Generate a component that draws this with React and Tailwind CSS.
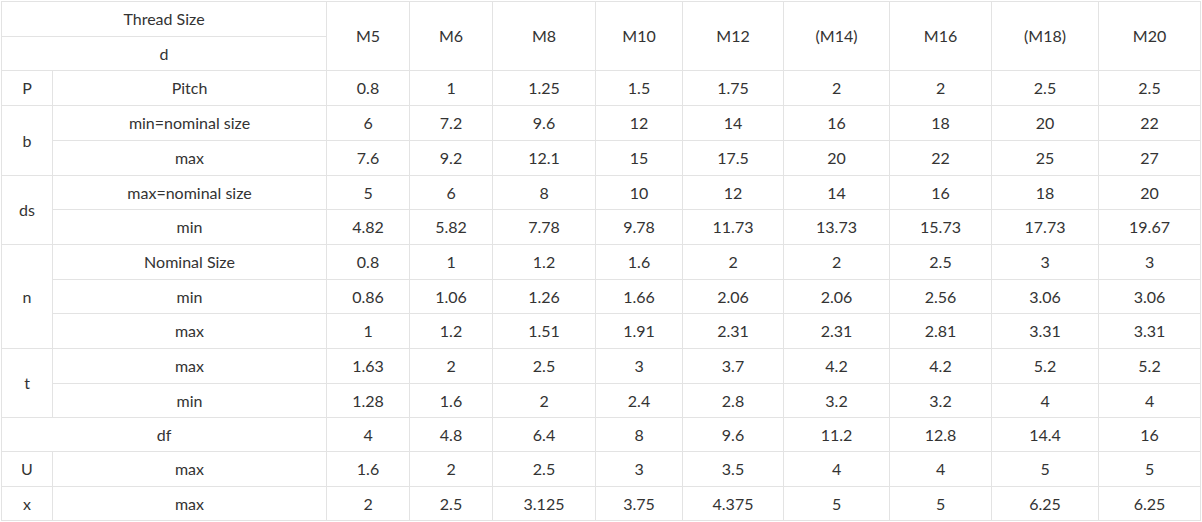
const SIZES = ['M5', 'M6', 'M8', 'M10', 'M12', '(M14)', 'M16', '(M18)', 'M20'];
const COLS = [51, 274, 83, 83, 103, 87, 101, 106, 102, 107, 102];

// [symbol, rowSpan, label, values, height]
const ROWS = [
  ['P', 1, 'Pitch', ['0.8', '1', '1.25', '1.5', '1.75', '2', '2', '2.5', '2.5'], 'h-[35px]'],
  ['b', 2, 'min=nominal size', ['6', '7.2', '9.6', '12', '14', '16', '18', '20', '22'], 'h-[35px]'],
  [null, 0, 'max', ['7.6', '9.2', '12.1', '15', '17.5', '20', '22', '25', '27'], 'h-[35px]'],
  ['ds', 2, 'max=nominal size', ['5', '6', '8', '10', '12', '14', '16', '18', '20'], 'h-[34px]'],
  [null, 0, 'min', ['4.82', '5.82', '7.78', '9.78', '11.73', '13.73', '15.73', '17.73', '19.67'], 'h-[35px]'],
  ['n', 3, 'Nominal Size', ['0.8', '1', '1.2', '1.6', '2', '2', '2.5', '3', '3'], 'h-[35px]'],
  [null, 0, 'min', ['0.86', '1.06', '1.26', '1.66', '2.06', '2.06', '2.56', '3.06', '3.06'], 'h-[34px]'],
  [null, 0, 'max', ['1', '1.2', '1.51', '1.91', '2.31', '2.31', '2.81', '3.31', '3.31'], 'h-[35px]'],
  ['t', 2, 'max', ['1.63', '2', '2.5', '3', '3.7', '4.2', '4.2', '5.2', '5.2'], 'h-[35px]'],
  [null, 0, 'min', ['1.28', '1.6', '2', '2.4', '2.8', '3.2', '3.2', '4', '4'], 'h-[34px]'],
  ['df', -1, null, ['4', '4.8', '6.4', '8', '9.6', '11.2', '12.8', '14.4', '16'], 'h-[34px]'],
  ['U', 1, 'max', ['1.6', '2', '2.5', '3', '3.5', '4', '4', '5', '5'], 'h-[35px]'],
  ['x', 1, 'max', ['2', '2.5', '3.125', '3.75', '4.375', '5', '5', '6.25', '6.25'], 'h-[34px]'],
];

const cell = 'border border-[#e3e3e3] p-0 text-center align-middle';

export default function App() {
  return (
    <div className="bg-white pl-px pt-px">
      <table
        className="w-[1200px] table-fixed border-collapse text-[16px] leading-none text-[#333]"
        style={{ fontFamily: 'Lato, "Liberation Sans", sans-serif' }}
      >
        <colgroup>
          {COLS.map((w, i) => (
            <col key={i} style={{ width: w }} />
          ))}
        </colgroup>
        <tbody>
          <tr>
            <td colSpan={2} className={`${cell} h-[35px]`}>Thread Size</td>
            {SIZES.map((s) => (
              <td key={s} rowSpan={2} className={cell}>{s}</td>
            ))}
          </tr>
          <tr>
            <td colSpan={2} className={`${cell} h-[34px]`}>d</td>
          </tr>
          {ROWS.map(([sym, span, label, vals, h], i) => (
            <tr key={i}>
              {span === -1 ? (
                <td colSpan={2} className={`${cell} ${h}`}>{sym}</td>
              ) : (
                <>
                  {sym !== null && (
                    <td rowSpan={span} className={cell}>{sym}</td>
                  )}
                  <td className={`${cell} ${h}`}>{label}</td>
                </>
              )}
              {vals.map((v, j) => (
                <td key={j} className={cell}>{v}</td>
              ))}
            </tr>
          ))}
        </tbody>
      </table>
    </div>
  );
}
